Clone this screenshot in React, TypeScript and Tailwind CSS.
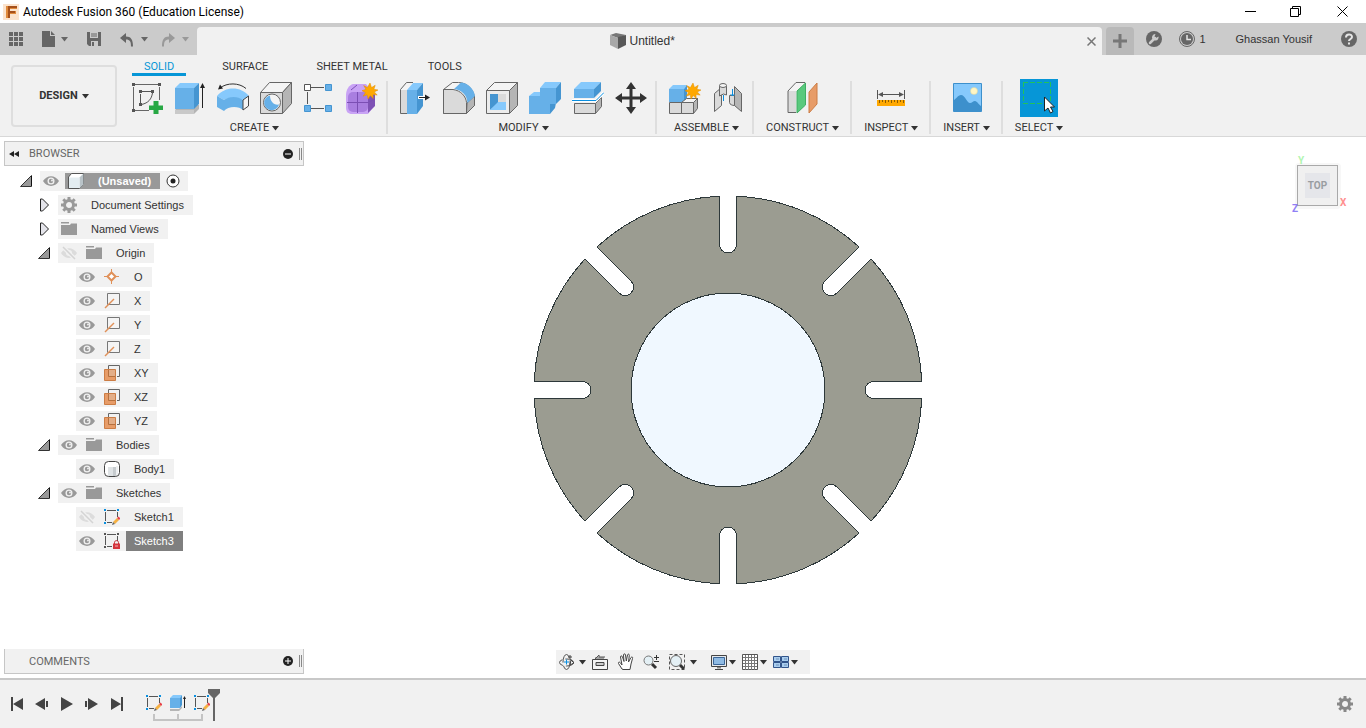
import type { ReactNode } from "react"

type IconProps = { size?: number; children: ReactNode; className?: string }

function Icon({ size = 32, children, className = "" }: IconProps) {
  return (
    <svg width={size} height={size} viewBox={`0 0 ${size} ${size}`} fill="none" className={`shrink-0 ${className}`} aria-hidden="true">
      {children}
    </svg>
  )
}

function Caret({ className = "text-[#333]" }: { className?: string }) {
  return (
    <svg width="7" height="5" viewBox="0 0 7 5" className={`shrink-0 ${className}`} aria-hidden="true">
      <path d="M0 0h7L3.500 4.500z" fill="currentColor" />
    </svg>
  )
}

const STAR = "M24 1l1.500 4.600 3.700-2.300-1.300 4 4.100.7-3.700 1.900 2.900 3.200-4.200-.6.2 4.100-2.900-3.100-2.300 3.500-.8-4.300-4 1.500 2.300-3.600L16 8.700l4-1.400-2.300-3.700L21.400 5.500z"

/* ---------- ribbon icons ---------- */

const SketchNewIcon = () => (
  <Icon>
    <path d="M4 2.500h23M2.500 5v22M4 28.500h14M28.500 5v13" stroke="#666" />
    <path d="M10 9.500h10M9.500 12v9M21.500 11c-1 6-4 10-11 11.500" stroke="#555" />
    <path d="M1 1h3v3H1zM27 1h3v3h-3zM1 27h3v3H1zM8 8h3v3H8zM20 8h3v3h-3zM8 21h3v3H8z" fill="#555" />
    <path d="M22.500 19h5v4.500H32v4.500h-4.500v4.500h-5V28H18v-4.500h4.500z" fill="#27a844" />
  </Icon>
)

const ExtrudeIcon = () => (
  <Icon>
    <path d="M1 28l5-5h19v4l-5 5H1z" fill="#b5b5b5" />
    <path d="M1 28h19v4H1z" fill="#c9c9c9" />
    <path d="M1 6l5-5h19l-5 5z" fill="#86c9fc" />
    <path d="M1 6h19v21H1z" fill="#66b0e8" />
    <path d="M20 6l5-5v21l-5 5z" fill="#4595d1" />
    <path d="M28.500 4v22" stroke="#222" />
    <path d="M26 6l2.500-5L31 6z" fill="#222" />
  </Icon>
)

const RevolveIcon = () => (
  <Icon>
    <path d="M0 14C8 4 24 4 32 14l-6 4c-6-3-14-3-19 0z" fill="#86c9fc" />
    <path d="M0 14l7 4v11l-7-4zM7 18c5-4 14-4 19 0v10c-4-4-15-4-19 1z" fill="#66b0e8" />
    <path d="M26 18l5.500-4v10L26 28z" fill="#f4f4f4" stroke="#444" />
    <path d="M3 6C10 .5 22 .5 29 6.500" stroke="#333" />
    <path d="M1 7.500L3 2.500l3 4z" fill="#222" />
  </Icon>
)

const HoleIcon = () => (
  <Icon>
    <path d="M.5 10.500l9-10h22l-9 10z" fill="#f4f4f4" stroke="#666" />
    <path d="M22.500 10.500l9-10v21l-9 10z" fill="#b5b5b5" stroke="#666" />
    <path d="M.5 10.500h22v21H.5z" fill="#dadada" stroke="#666" />
    <circle cx="12" cy="20.500" r="8.500" fill="#f4f4f4" stroke="#666" />
    <path d="M10 13.500c0 6 4 10 9 9a7.500 7.500 0 1 1-9-9z" fill="#66b0e8" />
  </Icon>
)

const PatternIcon = () => (
  <Icon>
    <path d="M8 5.500h13M4.500 10v12M8 26.500h13" stroke="#555" />
    <path d="M1.500 2.500h6v6h-6z" fill="#fff" stroke="#555" />
    <path d="M22.500 2.500h6v6h-6zM1.500 23.500h6v6h-6zM22.500 23.500h6v6h-6z" fill="#66b0e8" stroke="#4595d1" />
  </Icon>
)

const FormIcon = () => (
  <Icon>
    <path d="M7 2h13l9 11v10l-7 9H6c-4 0-6-2-6-7V13C0 8 3 3 7 2z" fill="#c9a3f5" />
    <path d="M22 14l7-2v12l-7 7z" fill="#7e52b5" />
    <rect x="2" y="10" width="20" height="20" rx="5" fill="#a97ee0" />
    <path d="M11.500 10v21M1 20.500h22M23 20l6-3M5 8l6-5" stroke="#7b4fb4" />
    <path d={STAR} fill="#ffa800" stroke="#e08f00" strokeWidth=".5" />
  </Icon>
)

const PressPullIcon = () => (
  <Icon>
    <path d="M1 8l5-7h8v31H1z" fill="#f4f4f4" />
    <path d="M1 8h6v24H1z" fill="#dadada" />
    <path d="M13 .5H6.500l-6 7v24H7" stroke="#666" />
    <path d="M7 8l6-7h10l-6 7z" fill="#86c9fc" />
    <path d="M7 8h10v24H7z" fill="#66b0e8" />
    <path d="M17 8l6-7v23l-6 8z" fill="#4595d1" />
    <path d="M18 15.500h8" stroke="#fff" strokeWidth="3" />
    <path d="M19 15.500h7" stroke="#222" />
    <path d="M25 12.500l5 3-5 3z" fill="#222" />
  </Icon>
)

const FilletIcon = () => (
  <Icon>
    <path d="M.5 7.500l9-7h6c9 0 16 8 16 16v7l-8 8H.5z" fill="#f4f4f4" stroke="#666" />
    <path d="M24 21l7.500-7v9.500l-8 8z" fill="#b5b5b5" stroke="#666" />
    <path d="M.5 7.500H10c8 1 13 7 13.500 13v11H.5z" fill="#dadada" stroke="#666" />
    <path d="M11 7l7-6.500c8 1 13 7 14 13.500l-7.500 7C24 13 19 8 11 7z" fill="#66b0e8" />
  </Icon>
)

const ShellIcon = () => (
  <Icon>
    <path d="M.5 8.500l8-8h23l-8 8z" fill="#f4f4f4" stroke="#666" />
    <path d="M23.500 8.500l8-8v23l-8 8z" fill="#b5b5b5" stroke="#666" />
    <path d="M.5 8.500h23v23H.5z" fill="#ececec" stroke="#666" />
    <path d="M4 12h16v16H4z" fill="#dadada" />
    <path d="M4 12h8v9l-8 7z" fill="#4595d1" />
    <path d="M12 20h8v8H4z" fill="#86c9fc" />
  </Icon>
)

const CombineIcon = () => (
  <Icon>
    <path d="M11 6l5-6h16l-5 6z" fill="#86c9fc" />
    <path d="M27 6l5-6v17l-5 5zM21 22h6v-1l-1 5-5 6z" fill="#4595d1" />
    <path d="M0 14l5-4h6v4z" fill="#86c9fc" />
    <path d="M11 6h16v16h-6v10H0V14h11z" fill="#66b0e8" />
  </Icon>
)

const SplitIcon = () => (
  <Icon>
    <path d="M2 7l7-7h20l-7 7z" fill="#86c9fc" />
    <path d="M2 7h20v9H2z" fill="#66b0e8" />
    <path d="M22 7l7-7v9l-7 7z" fill="#4595d1" />
    <path d="M23.500 21.500l6-6v9l-6 7z" fill="#b5b5b5" stroke="#666" />
    <path d="M2.500 21.500h21v10h-21z" fill="#dadada" stroke="#666" />
    <path d="M0 18.500h24l8-8" stroke="#fff" strokeWidth="3" />
    <path d="M0 18.500h24l8-8" stroke="#0a8fe0" />
  </Icon>
)

const MoveIcon = () => (
  <Icon>
    <path d="M16 5v22M5 16h22" stroke="#333" strokeWidth="3" />
    <path d="M16 0l5 7H11zM16 32l-5-7h10zM0 16l7-5v10zM32 16l-7 5V11z" fill="#333" />
  </Icon>
)

const NewComponentIcon = () => (
  <Icon>
    <path d="M0 7l4-4h14l-3 4z" fill="#86c9fc" />
    <path d="M15 7l3-4v13l-3 4z" fill="#4595d1" />
    <path d="M0 7h15v13H0z" fill="#66b0e8" />
    <path d="M12.500 20.500l5-4h11l-4 4z" fill="#f4f4f4" stroke="#666" />
    <path d="M24.500 20.500l4-4v10l-4 5z" fill="#b5b5b5" stroke="#666" />
    <path d="M.5 20.500h12v11H.5zM12.500 20.500h12v11h-12z" fill="#dadada" stroke="#666" />
    <path d={STAR} fill="#ffa800" stroke="#e08f00" strokeWidth=".5" />
  </Icon>
)

const JointIcon = () => (
  <Icon>
    <path d="M2.500 11.500l7-6v18l-7 6z" fill="#dadada" stroke="#666" />
    <path d="M7.500 4v10l4-2 3 1V4z" fill="#dadada" stroke="#666" />
    <ellipse cx="11" cy="3.500" rx="3.500" ry="2" fill="#f4f4f4" stroke="#666" />
    <path d="M22.500 4.500l7 7v18l-7-6z" fill="#b5b5b5" stroke="#666" />
    <path d="M17.500 13.500v7c0 2 3 3 5 3v-10z" fill="#dadada" stroke="#666" />
    <path d="M11.500 13v6M20.500 7v7" stroke="#0a8fe0" />
    <path d="M18.500 12l2 2 2-2" stroke="#0a8fe0" />
  </Icon>
)

const PlaneIcon = () => (
  <Icon>
    <path d="M1 9l8-8.500h9L9 9z" fill="#f4f4f4" />
    <path d="M1 9h8v22H1z" fill="#dadada" />
    <path d="M18 .5H9L1 9v21.500h8" stroke="#666" />
    <path d="M10 9l8.500-8v22L10 31z" fill="#59c97d" stroke="#3fae63" />
    <path d="M22 10l8-9v21l-8 9z" fill="#e79c68" stroke="#cc7d45" />
  </Icon>
)

const MeasureIcon = () => (
  <Icon>
    <path d="M2.500 8v9M29.500 8v9M5 12.500h22" stroke="#555" />
    <path d="M3 12.500l5-2.500v5zM29 12.500L24 10v5z" fill="#555" />
    <path d="M2 18h28v6H2z" fill="#ffa800" />
    <path d="M4.500 18v3M7.500 18v2M10.500 18v3M13.500 18v2M16.500 18v3M19.500 18v2M22.500 18v3M25.500 18v2M28.500 18v3" stroke="#8a5b00" />
  </Icon>
)

const PictureIcon = () => (
  <Icon>
    <path d="M2.500 1.500h28v28h-28z" fill="#86c9fc" stroke="#3d90cc" />
    <circle cx="23" cy="9" r="3.500" fill="#fff6c4" stroke="#d9d39c" strokeWidth=".5" />
    <path d="M3 18c2-1 4-5 7-5 4 0 6 8 9 8 2 0 3-2 5-2s4 4 6 5v5H3z" fill="#3d90cc" />
  </Icon>
)

const SelectIcon = () => (
  <Icon size={38}>
    <path
      d="M3 3.500h28M3 24.500h28M3.500 3v22M30.500 3v22"
      stroke="#22c25a"
      strokeDasharray="5 2"
      shapeRendering="crispEdges"
    />
    <path d="M24.500 18v14l3.500-3 2.500 5 2.500-1.500-2.500-4.500h4z" fill="#fff" stroke="#222" />
  </Icon>
)

/* ---------- browser tree icons ---------- */

const EyeIcon = () => (
  <Icon size={16}>
    <path d="M0 8c4-6.500 12-6.500 16 0-4 6.500-12 6.500-16 0z" fill="#999" />
    <circle cx="8" cy="8" r="3.500" fill="#f1f1f1" />
    <circle cx="8" cy="8" r="2.200" fill="#999" />
    <circle cx="9" cy="7.500" r="1" fill="#eee" />
  </Icon>
)

const EyeOffIcon = () => (
  <Icon size={16}>
    <path d="M0 8c4-6.500 12-6.500 16 0-4 6.500-12 6.500-16 0z" fill="#dcdcdc" />
    <circle cx="8" cy="8" r="3" fill="#f1f1f1" />
    <circle cx="8" cy="8" r="1.500" fill="#dcdcdc" />
    <path d="M2 2l12 12" stroke="#f1f1f1" strokeWidth="4" />
    <path d="M2 2l12 12" stroke="#d4d4d4" strokeWidth="1.500" />
  </Icon>
)

const FolderIcon = () => (
  <Icon size={16}>
    <path d="M0 1h8v1.500H0zM0 4h9l1-1.500h6V14H0z" fill="#999" />
  </Icon>
)

const GearIcon = ({ className = "text-[#999]" }: { className?: string }) => (
  <Icon size={16} className={className}>
    <circle cx="8" cy="8" r="4.500" stroke="currentColor" strokeWidth="3" />
    <path
      d="M8 0v3M8 13v3M0 8h3M13 8h3M2.300 2.300l2.200 2.200M11.500 11.500l2.200 2.200M13.700 2.300l-2.200 2.200M4.500 11.500l-2.200 2.200"
      stroke="currentColor"
      strokeWidth="3"
    />
  </Icon>
)

const DocumentIcon = () => (
  <Icon size={16}>
    <path d="M.5 4l3-3.500h12v11l-4 4H.5z" fill="#fff" stroke="#555" />
    <path d="M11.500 4.500l4-4v11l-4 4z" fill="#b9c3c8" />
    <path d="M1 4.500h10.500V15H1z" fill="#e4edf1" />
  </Icon>
)

const OriginIcon = () => (
  <Icon size={16}>
    <path d="M7.500 0v15M0 7.500h15" stroke="#e09058" />
    <path d="M7.500 3.500l4 4-4 4-4-4z" fill="#fff" stroke="#e09058" strokeWidth="2" />
  </Icon>
)

const AxisIcon = () => (
  <Icon size={16}>
    <path d="M3.500.5h12v11h-12z" fill="#f4f4f4" stroke="#777" />
    <path d="M1 15l9-9" stroke="#e09058" strokeWidth="1.500" />
  </Icon>
)

const OriginPlaneIcon = () => (
  <Icon size={16}>
    <path d="M4.500 4V.5h11v11H13" stroke="#666" />
    <path d="M.5 4.500h11v11H.5z" fill="#e79c68" stroke="#cc7d45" />
    <path d="M5 5h6v6H5z" fill="#e3ae88" />
    <path d="M4.500 5v6.500H11" stroke="#b5703e" />
  </Icon>
)

const BodyIcon = () => (
  <Icon size={16}>
    <rect x=".5" y=".5" width="15" height="15" rx="4" fill="#fff" stroke="#444" />
    <path d="M4 6h5v9H4z" fill="#dfe3e5" />
    <path d="M9 6h3v9H9z" fill="#c6cbce" />
    <path d="M12 5h2v9h-2z" fill="#eef0f1" />
  </Icon>
)

const SketchIcon = ({ locked = false }: { locked?: boolean }) => (
  <Icon size={16}>
    <path d="M3 1.500h9M1.500 3v9M3 13.500h5M13.500 3v5" stroke="#555" />
    <path d="M0 0h2v2H0zM13 0h2v2h-2zM0 13h2v2H0z" fill={locked ? "#555" : "#0a8fe0"} />
    {locked ? (
      <>
        <path d="M10.500 11V9.500c0-2.500 4-2.500 4 0V11" stroke="#c5242c" />
        <path d="M9 10.500h7V16H9z" fill="#d5343c" />
        <path d="M11 13h3" stroke="#f1b1b4" />
      </>
    ) : (
      <>
        <path d="M9 13l4-4 2 2-4 4z" fill="#f5b041" />
        <path d="M13 9l1.500-1.500 2 2L15 11z" fill="#e8414a" />
        <path d="M9 13l2 2-3 1z" fill="#666" />
      </>
    )}
  </Icon>
)

const SmallExtrudeIcon = () => (
  <Icon size={16}>
    <path d="M0 14h9l3-3v2l-3 3H0z" fill="#b5b5b5" />
    <path d="M0 3l3-3h9l-2 3z" fill="#86c9fc" />
    <path d="M0 3h10v10H0z" fill="#66b0e8" />
    <path d="M10 3l2-3v10l-2 3z" fill="#4595d1" />
    <path d="M14.500 2v11" stroke="#222" />
    <path d="M13 4l1.500-3L16 4z" fill="#222" />
  </Icon>
)

/* ---------- data ---------- */

type Tool = { name: string; icon: ReactNode }

const ribbon: { label: string; tools: Tool[] }[] = [
  {
    label: "CREATE",
    tools: [
      { name: "Create Sketch", icon: <SketchNewIcon /> },
      { name: "Extrude", icon: <ExtrudeIcon /> },
      { name: "Revolve", icon: <RevolveIcon /> },
      { name: "Hole", icon: <HoleIcon /> },
      { name: "Rectangular Pattern", icon: <PatternIcon /> },
      { name: "Create Form", icon: <FormIcon /> },
    ],
  },
  {
    label: "MODIFY",
    tools: [
      { name: "Press Pull", icon: <PressPullIcon /> },
      { name: "Fillet", icon: <FilletIcon /> },
      { name: "Shell", icon: <ShellIcon /> },
      { name: "Combine", icon: <CombineIcon /> },
      { name: "Split Body", icon: <SplitIcon /> },
      { name: "Move", icon: <MoveIcon /> },
    ],
  },
  {
    label: "ASSEMBLE",
    tools: [
      { name: "New Component", icon: <NewComponentIcon /> },
      { name: "Joint", icon: <JointIcon /> },
    ],
  },
  { label: "CONSTRUCT", tools: [{ name: "Offset Plane", icon: <PlaneIcon /> }] },
  { label: "INSPECT", tools: [{ name: "Measure", icon: <MeasureIcon /> }] },
  { label: "INSERT", tools: [{ name: "Canvas", icon: <PictureIcon /> }] },
  { label: "SELECT", tools: [{ name: "Select", icon: <SelectIcon /> }] },
]

type Node = {
  label: string
  level: 0 | 1 | 2
  arrow?: "open" | "closed"
  eye?: "on" | "off"
  icon: ReactNode
  state?: "root" | "selected"
}

const tree: Node[] = [
  { label: "(Unsaved)", level: 0, arrow: "open", eye: "on", icon: <DocumentIcon />, state: "root" },
  { label: "Document Settings", level: 1, arrow: "closed", icon: <GearIcon /> },
  { label: "Named Views", level: 1, arrow: "closed", icon: <FolderIcon /> },
  { label: "Origin", level: 1, arrow: "open", eye: "off", icon: <FolderIcon /> },
  { label: "O", level: 2, eye: "on", icon: <OriginIcon /> },
  { label: "X", level: 2, eye: "on", icon: <AxisIcon /> },
  { label: "Y", level: 2, eye: "on", icon: <AxisIcon /> },
  { label: "Z", level: 2, eye: "on", icon: <AxisIcon /> },
  { label: "XY", level: 2, eye: "on", icon: <OriginPlaneIcon /> },
  { label: "XZ", level: 2, eye: "on", icon: <OriginPlaneIcon /> },
  { label: "YZ", level: 2, eye: "on", icon: <OriginPlaneIcon /> },
  { label: "Bodies", level: 1, arrow: "open", eye: "on", icon: <FolderIcon /> },
  { label: "Body1", level: 2, eye: "on", icon: <BodyIcon /> },
  { label: "Sketches", level: 1, arrow: "open", eye: "on", icon: <FolderIcon /> },
  { label: "Sketch1", level: 2, eye: "off", icon: <SketchIcon /> },
  { label: "Sketch3", level: 2, eye: "on", icon: <SketchIcon locked />, state: "selected" },
]

const indent = ["pl-[20px]", "pl-[38px]", "pl-[56px]"]

/* ---------- sections ---------- */

function TitleBar() {
  return (
    <header className="flex h-[23px] shrink-0 items-center bg-white pl-[3px] text-black">
      <Icon size={16}>
        <path d="M0 0h16v16H0z" fill="#fbe3cd" />
        <path d="M3 2h11v3H7v2h6v3H7v4H3z" fill="#e08a3c" />
        <path d="M5 2h9v2H7v3h5v2H7v5H5z" fill="#a6501a" />
      </Icon>
      <h1 className="ml-1 flex-1 font-[Roboto,sans-serif] text-[12px] leading-4">Autodesk Fusion 360 (Education License)</h1>
      <button aria-label="Minimize" className="flex w-[46px] justify-center">
        <Icon size={11}><path d="M0 5.500h11" stroke="#000" /></Icon>
      </button>
      <button aria-label="Restore" className="flex w-[45px] justify-center">
        <Icon size={11}><path d="M.5 2.500h8v8h-8zM2.500 2V.5h8v8H9" stroke="#000" /></Icon>
      </button>
      <button aria-label="Close" className="flex w-12 justify-center">
        <Icon size={11}><path d="M.5.5l10 10M10.500.5l-10 10" stroke="#000" /></Icon>
      </button>
    </header>
  )
}

function TabBar() {
  return (
    <div className="flex h-8 shrink-0 bg-[#cbcbcb] text-[#666]">
      <div className="flex w-[197px] items-center pl-2">
        <button aria-label="Data Panel">
          <Icon size={16}>
            <path d="M1 1h4v4H1zM6 1h4v4H6zM11 1h4v4h-4zM1 6h4v4H1zM6 6h4v4H6zM11 6h4v4h-4zM1 11h4v4H1zM6 11h4v4H6zM11 11h4v4h-4z" fill="#666" />
          </Icon>
        </button>
        <button aria-label="File" className="ml-4 flex items-center gap-[5px]">
          <Icon size={16}>
            <path d="M2 0h8v5h5v11H2zM11 0l4 4h-4z" fill="#666" />
          </Icon>
          <Caret className="text-[#666]" />
        </button>
        <button aria-label="Save" className="ml-[18px]">
          <Icon size={16}>
            <path d="M1 1h14v14H3l-2-2z" fill="#666" />
            <path d="M4 1h8v6H4zM5 10h7v5H5z" fill="#cbcbcb" />
            <path d="M5 3h6M5 5h6" stroke="#666" />
            <path d="M6 11h2v4H6z" fill="#666" />
          </Icon>
        </button>
        <button aria-label="Undo" className="ml-[17px] flex items-center gap-1.5">
          <Icon size={16}>
            <path d="M1 7l6-5v3.500c5 0 7 3 7 10h-2c0-5-1-7-5-7V12z" fill="#666" />
          </Icon>
          <Caret className="text-[#666]" />
        </button>
        <button aria-label="Redo" className="ml-3 flex items-center gap-1.5">
          <Icon size={16}>
            <path d="M15 7L9 2v3.500c-5 0-7 3-7 10h2c0-5 1-7 5-7V12z" fill="#999" />
          </Icon>
          <Caret className="text-[#999]" />
        </button>
      </div>
      <div className="mt-1 flex flex-1 items-center rounded-t bg-[#f1f1f1]">
        <div className="flex flex-1 items-center justify-center gap-1 text-[12px] text-[#333]">
          <Icon size={16}>
            <path d="M0 2l6-2 10 2-8 3z" fill="#777" />
            <path d="M0 2l8 3v11l-8-4z" fill="#a8a8a8" />
            <path d="M8 4l8-2v10l-8 4z" fill="#585858" />
          </Icon>
          Untitled*
        </div>
        <button aria-label="Close tab" className="mr-1.5">
          <Icon size={9}><path d="M.5.5l8 8M8.500.5l-8 8" stroke="#777" strokeWidth="1.500" /></Icon>
        </button>
      </div>
      <button aria-label="New tab" className="mt-1 ml-1 flex w-7 items-center justify-center rounded-t bg-[#b9b9b9]">
        <Icon size={14}><path d="M7 0v14M0 7h14" stroke="#777" strokeWidth="3" /></Icon>
      </button>
      <button aria-label="Extensions" className="ml-3">
        <Icon size={16}>
          <circle cx="8" cy="8" r="8" fill="#666" />
          <path d="M4 12l5-5" stroke="#cbcbcb" strokeWidth="2.500" strokeLinecap="round" />
          <path d="M12.500 5.500a3.300 3.300 0 1 1-3-2.500L8.500 5.500l1.500 1.500z" fill="#cbcbcb" />
        </Icon>
      </button>
      <button aria-label="Job Status" className="ml-[17px] flex items-center gap-1 text-[11px] text-[#333]">
        <Icon size={16}>
          <circle cx="8" cy="8" r="7.500" stroke="#666" />
          <circle cx="8" cy="8" r="6" fill="#666" />
          <path d="M8 4v4.500h4" stroke="#e5e5e5" strokeWidth="1.500" />
        </Icon>
        1
      </button>
      <button className="ml-[30px] text-[11px] text-[#333]">Ghassan Yousif</button>
      <button aria-label="Help" className="mr-[9px] ml-auto pl-[29px]">
        <Icon size={16}>
          <circle cx="8" cy="8" r="8" fill="#666" />
          <path d="M5 6.500C5 2.500 11 2.500 11 6c0 2-3 2-3 4" stroke="#e5e5e5" strokeWidth="2" />
          <path d="M7 11.500h2v2H7z" fill="#e5e5e5" />
        </Icon>
      </button>
    </div>
  )
}

function Ribbon() {
  return (
    <div className="flex shrink-0 items-start border-b border-[#d8d8d8] bg-[#f1f1f1] font-[Roboto,sans-serif] text-[11px] leading-3 text-[#333]">
      <button className="mt-2.5 ml-[11px] flex h-[62px] w-[106px] items-center justify-center gap-1 rounded border-2 border-[#dedede] font-bold">
        DESIGN <Caret />
      </button>
      <div className="ml-[15px]">
        <nav className="flex h-[21px] gap-6 pt-[5px]">
          <button className="border-b-3 border-[#0696d7] px-3 text-[#0696d7]">SOLID</button>
          <button className="border-b-3 border-transparent px-3">SURFACE</button>
          <button className="border-b-3 border-transparent px-3">SHEET METAL</button>
          <button className="border-b-3 border-transparent px-1">TOOLS</button>
        </nav>
        <div className="-ml-[13px] flex pt-[5px] pb-0.5">
          {ribbon.map((group, i) => (
            <div
              key={group.label}
              className={`flex h-[53px] flex-col items-center justify-between pl-3 ${group.tools.length > 1 ? "pr-2" : "pr-[11px]"} ${i < ribbon.length - 1 ? "border-r-2 border-[#dedede]" : ""}`}
            >
              <div className="flex gap-[11px]">
                {group.tools.map((tool) => (
                  <button
                    key={tool.name}
                    aria-label={tool.name}
                    className={tool.name === "Select" ? "-mt-0.5 h-[38px] bg-[#0696d7]" : "pt-px"}
                  >
                    {tool.icon}
                  </button>
                ))}
              </div>
              <button className="flex items-center gap-[3px]">
                {group.label} <Caret />
              </button>
            </div>
          ))}
        </div>
      </div>
    </div>
  )
}

function TreeArrow({ kind }: { kind?: "open" | "closed" }) {
  if (!kind) return <span className="w-5" />
  return (
    <button aria-label={kind === "open" ? "Collapse" : "Expand"} className="w-5">
      <Icon size={14}>
        {kind === "open" ? (
          <>
            <path d="M11.500 1.500v11h-11z" fill="#999" stroke="#333" />
            <path d="M11.500 2v10" stroke="#111" />
          </>
        ) : (
          <path d="M2.500 1v12h2l6-6-6-6z" fill="#e4e4ea" stroke="#222" />
        )}
      </Icon>
    </button>
  )
}

function TreeRow({ node }: { node: Node }) {
  const root = node.state === "root"
  return (
    <li className={`flex h-5 items-center ${indent[node.level]}`}>
      <TreeArrow kind={node.arrow} />
      <div className="flex h-5 items-center bg-[#f1f1f1] pl-[3px]">
        {node.eye && (
          <button aria-label={`Toggle ${node.label}`} className="mr-1.5">
            {node.eye === "on" ? <EyeIcon /> : <EyeOffIcon />}
          </button>
        )}
        <div className={`flex items-center ${node.eye ? "pl-[3px]" : ""} ${root ? "h-4 bg-[#999] font-bold text-white" : "h-5"}`}>
          {node.icon}
          <span className={`ml-1.5 pr-[9px] pl-2 leading-5 ${node.state === "selected" ? "bg-[#7f7f7f] text-white" : ""}`}>{node.label}</span>
        </div>
        {root && (
          <label className="mr-2 ml-1.5 flex">
            <input type="radio" name="active" aria-label="Activate" defaultChecked className="sr-only" />
            <Icon size={14}>
              <circle cx="7" cy="7" r="6" fill="#fff" stroke="#333" />
              <circle cx="7" cy="7" r="2.500" fill="#222" />
            </Icon>
          </label>
        )}
      </div>
    </li>
  )
}

function PanelHandle({ sign, label }: { sign: "minus" | "plus"; label: string }) {
  return (
    <>
      <button aria-label={label}>
        <Icon size={10}>
          <circle cx="5" cy="5" r="5" fill="#222" />
          <path d={sign === "minus" ? "M2 5h6" : "M2 5h6M5 2v6"} stroke="#fff" />
        </Icon>
      </button>
      <span className="mr-px ml-1.5 h-3 w-[3px] border-x border-[#888]" />
    </>
  )
}

function Browser() {
  return (
    <aside className="w-[304px] pt-1 pl-1">
      <div className="flex h-[25px] items-center border border-[#c6c6c6] bg-[#f1f1f1]">
        <button aria-label="Collapse browser" className="ml-1">
          <Icon size={10}><path d="M5 2v6L0 5zM10 2v6L5 5z" fill="#222" /></Icon>
        </button>
        <h2 className="ml-2.5 flex-1 font-[Roboto,sans-serif] text-[11px] leading-[15px] text-[#666]">BROWSER</h2>
        <PanelHandle sign="minus" label="Minimize browser" />
      </div>
      <ul className="-ml-1 flex flex-col gap-1 pt-[5px] text-[11px] text-[#333]">
        {tree.map((node) => (
          <TreeRow key={node.label} node={node} />
        ))}
      </ul>
    </aside>
  )
}

const RIM = 194
const SLOT = 8.5
const SLOT_END = 145.5

// outer profile: eight rim arcs joined by round-ended slots
function discProfile() {
  const edge = Math.sqrt(RIM * RIM - SLOT * SLOT)
  const parts: string[] = []
  for (let i = 0; i < 8; i++) {
    const a = (i * Math.PI) / 4
    const at = (x: number, y: number) =>
      `${(x * Math.cos(a) - y * Math.sin(a)).toFixed(2)} ${(x * Math.sin(a) + y * Math.cos(a)).toFixed(2)}`
    parts.push(i === 0 ? `M${at(-SLOT, -edge)}` : `A${RIM} ${RIM} 0 0 1 ${at(-SLOT, -edge)}`)
    parts.push(`L${at(-SLOT, -SLOT_END)}A${SLOT} ${SLOT} 0 0 0 ${at(SLOT, -SLOT_END)}L${at(SLOT, -edge)}`)
  }
  return `${parts.join("")}A${RIM} ${RIM} 0 0 1 ${-SLOT} ${-edge}Z`
}

function Disc() {
  return (
    <svg width="392" height="392" viewBox="-196 -196 392 392" role="img" aria-label="Slotted disc" shapeRendering="crispEdges">
      <path d={discProfile()} fill="#9b9c91" stroke="#2d383a" />
      <circle r="97" fill="#f0f8ff" stroke="#2d383a" />
    </svg>
  )
}

function ViewCube() {
  return (
    <svg width="64" height="66" viewBox="0 0 64 66" role="img" aria-label="View cube" className="font-[Roboto,sans-serif] font-bold">
      <rect x="7" y="13" width="46" height="46" rx="4" fill="#f7f7f7" />
      <rect x="9.500" y="15.500" width="40" height="40" fill="#f0f0f0" stroke="#a9a9a9" />
      <rect x="17" y="23" width="25" height="25" fill="#e5e6ea" />
      <text x="29.500" y="39" textAnchor="middle" fontSize="10" fill="#999da1">TOP</text>
      <text x="10" y="14" fontSize="10" fill="#b0f5b0">Y</text>
      <text x="4" y="62" fontSize="10" fill="#9080f5">Z</text>
      <text x="52" y="56" fontSize="10" fill="#ff9090">X</text>
    </svg>
  )
}

function NavBar() {
  return (
    <nav aria-label="Navigation" className="flex h-6 items-center self-end bg-[#f1f1f1] pr-3 pl-[3px]">
      <button aria-label="Orbit" className="flex items-center gap-1">
        <Icon size={16}>
          <ellipse cx="7.500" cy="8" rx="3.500" ry="7.500" stroke="#555" strokeDasharray="14 3" />
          <ellipse cx="7.500" cy="8.500" rx="7" ry="3.500" stroke="#555" strokeDasharray="9 3" />
          <path d="M5 8h5M7.500 5.500v5" stroke="#0a8fe0" />
          <path d="M12 6l3 3-4 2zM9 3h4M11 1v4" stroke="#444" />
        </Icon>
        <Caret />
      </button>
      <button aria-label="Look At" className="ml-1.5">
        <Icon size={17}>
          <path d="M.5 5.500h15v10H.5z" fill="#f4f4f4" stroke="#444" />
          <path d="M4 8.500h8v3H4z" fill="#ccc" stroke="#444" />
          <path d="M3 5l4-4v2h6M3 4h9" stroke="#555" />
        </Icon>
      </button>
      <button aria-label="Pan" className="ml-2">
        <Icon size={18}>
          <path
            d="M5 16L1.500 10.500c-.5-1.500 1-2 2-.5L5 12 3.500 4c0-1.500 1.500-1.500 2 0L7 8.500 6.500 2c0-1.500 2-1.500 2 0l.8 6L10.500 2c.5-1.500 2-1 1.800.5L11.500 9l2.500-4.500c1-1 2-.5 1.500 1L14 11l-1 5.500H6z"
            fill="#fff"
            stroke="#444"
          />
        </Icon>
      </button>
      <button aria-label="Zoom" className="ml-2">
        <Icon size={17}>
          <circle cx="5.500" cy="6.500" r="4.500" fill="#e4f0f5" stroke="#777" />
          <path d="M9 10l4 4" stroke="#333" strokeWidth="3" />
          <path d="M11 3.500h5M13.500 1v5M11 7.500h5" stroke="#333" />
        </Icon>
      </button>
      <button aria-label="Fit" className="ml-[9px] flex items-center gap-1">
        <Icon size={17}>
          <path d="M.5.5h15v15H.5z" stroke="#555" strokeDasharray="3 2" />
          <circle cx="7" cy="7" r="5.500" fill="#e4f0f5" stroke="#666" />
          <path d="M11 11l4 4" stroke="#333" strokeWidth="3" />
        </Icon>
        <Caret />
      </button>
      <button aria-label="Display Settings" className="ml-3.5 flex items-center gap-px">
        <Icon size={17}>
          <path d="M.5 1.500h15v11H.5z" fill="#e4e8ec" stroke="#444" />
          <path d="M2.500 3.500h11v7h-11z" fill="#8fbbe4" stroke="#3b6698" />
          <path d="M6 13h4v1.500H6z" fill="#888" />
          <path d="M4 15.500h8" stroke="#444" />
        </Icon>
        <Caret />
      </button>
      <button aria-label="Grid and Snaps" className="ml-1.5 flex items-center gap-px">
        <Icon size={17}>
          <path d="M.5.5h15v15H.5z" fill="#fff" stroke="#555" />
          <path d="M3.500 1v15M6.500 1v15M9.500 1v15M12.500 1v15M1 3.500h14M1 6.500h14M1 9.500h14M1 12.500h14" stroke="#777" />
        </Icon>
        <Caret />
      </button>
      <button aria-label="Viewports" className="ml-1.5 flex items-center gap-px">
        <Icon size={17}>
          <path d="M.5 2.500h7v5h-7zM8.500 2.500h7v5h-7zM.5 8.500h7v5h-7zM8.500 8.500h7v5h-7z" fill="#a9cdee" stroke="#31548a" />
          <path d="M3 5h3M11 5h3M3 11h3M11 11h3" stroke="#6d8fb8" />
        </Icon>
        <Caret />
      </button>
    </nav>
  )
}

const playback = [
  { name: "Go to start", d: "M1 0h2v14H1zM13 1v12L3 7z" },
  { name: "Step back", d: "M10 1v12L0 7zM11 4h2v6h-2z" },
  { name: "Play", d: "M1 0v14l12-7z" },
  { name: "Step forward", d: "M0 4h2v6H0zM3 1v12l10-6z" },
  { name: "Go to end", d: "M1 1v12l10-6zM11 0h2v14h-2z" },
]

function Timeline() {
  return (
    <footer className="flex h-[50px] shrink-0 items-center border-t-2 border-[#c8c8c8] bg-[#f1f1f1] pl-2.5">
      <div className="flex gap-[11px]">
        {playback.map((item) => (
          <button key={item.name} aria-label={item.name}>
            <Icon size={14}><path d={item.d} fill="#444" /></Icon>
          </button>
        ))}
      </div>
      <div className="relative ml-[22px] pt-2">
        <div className="flex gap-2">
          <button aria-label="Sketch1 feature"><SketchIcon /></button>
          <button aria-label="Extrude1 feature"><SmallExtrudeIcon /></button>
          <button aria-label="Sketch3 feature"><SketchIcon /></button>
        </div>
        <div className="mx-[7px] mt-[3px] flex h-[7px] border-2 border-t-0 border-[#c4c4c4]">
          <span className="flex-1 border-r-2 border-[#c4c4c4]" />
          <span className="flex-1" />
        </div>
        <svg width="12" height="32" viewBox="0 0 12 32" className="absolute top-0.5 -right-2.5" aria-hidden="true">
          <path d="M0 0h12v4L7 9v23H5V9L0 4z" fill="#666" />
        </svg>
      </div>
      <button aria-label="Timeline settings" className="mr-[13px] ml-auto">
        <GearIcon className="text-[#888]" />
      </button>
    </footer>
  )
}

export default function App() {
  return (
    <div className="flex min-h-screen w-full flex-col bg-white font-['Liberation_Sans',Arial,sans-serif]">
      <TitleBar />
      <TabBar />
      <Ribbon />
      <main className="flex flex-1 flex-col">
        <div className="flex flex-1">
          <Browser />
          <section className="flex flex-1 items-center justify-center pb-1.5">
            <Disc />
          </section>
          <div className="flex w-[214px] items-start justify-end pt-[13px] pr-3.5">
            <ViewCube />
          </div>
        </div>
        <div className="grid grid-cols-[1fr_auto_1fr] pb-1">
          <div className="ml-1 flex h-[25px] w-[300px] items-center self-end border border-t-0 border-[#c6c6c6] bg-[#f1f1f1]">
            <h2 className="ml-6 flex-1 font-[Roboto,sans-serif] text-[11px] leading-[15px] text-[#666]">COMMENTS</h2>
            <PanelHandle sign="plus" label="Expand comments" />
          </div>
          <NavBar />
          <span />
        </div>
      </main>
      <Timeline />
    </div>
  )
}
